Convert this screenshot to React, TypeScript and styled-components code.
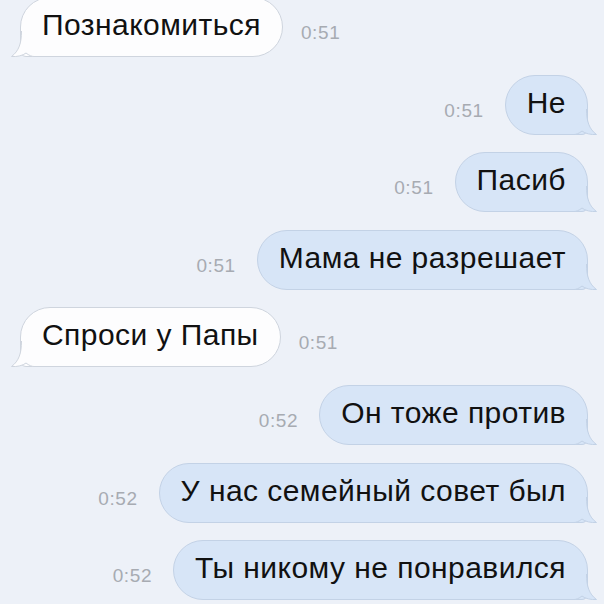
import React from 'react';
import styled, { createGlobalStyle } from 'styled-components';

const GlobalStyle = createGlobalStyle`
  html, body {
    margin: 0;
    padding: 0;
    background: #edf1f8;
  }
  body {
    font-family: "Liberation Sans", Arial, sans-serif;
  }
`;

const Chat = styled.div`
  width: 604px;
  height: 604px;
  overflow: hidden;
  background: #edf1f8;
  box-sizing: border-box;
  padding: 0 16px 0 20px;
`;

const List = styled.div`
  display: flex;
  flex-direction: column;
  gap: 17.6px;
  margin-top: -3px;
`;

const Row = styled.div<{ $out?: boolean }>`
  display: flex;
  align-items: center;
  justify-content: ${(p) => (p.$out ? 'flex-end' : 'flex-start')};
`;

const Bubble = styled.div<{ $out?: boolean }>`
  position: relative;
  box-sizing: border-box;
  height: 60px;
  padding: 9px 21px 13px;
  font-size: 30px;
  line-height: 36px;
  letter-spacing: 0.45px;
  color: #111;
  white-space: nowrap;
  background: ${(p) => (p.$out ? '#d7e5f7' : '#fdfdfe')};
  border: 1px solid ${(p) => (p.$out ? '#c3d2e6' : '#cfd5de')};
  border-radius: ${(p) => (p.$out ? '30px 30px 6px 30px' : '30px 30px 30px 6px')};
`;

const Tail = styled.svg<{ $out?: boolean }>`
  position: absolute;
  bottom: -1px;
  width: 24px;
  height: 26px;
  ${(p) => (p.$out ? 'right: -11px;' : 'left: -11px; transform: scaleX(-1);')}
`;

const Time = styled.span<{ $out?: boolean }>`
  font-size: 19px;
  letter-spacing: 0.6px;
  color: #a7abb2;
  margin-top: 12px;
  ${(p) => (p.$out ? 'margin-right: 21px;' : 'margin-left: 18px;')}
`;

interface Msg {
  text: string;
  time: string;
  out: boolean;
}

const messages: Msg[] = [
  { text: 'Познакомиться', time: '0:51', out: false },
  { text: 'Не', time: '0:51', out: true },
  { text: 'Пасиб', time: '0:51', out: true },
  { text: 'Мама не разрешает', time: '0:51', out: true },
  { text: 'Спроси у Папы', time: '0:51', out: false },
  { text: 'Он тоже против', time: '0:52', out: true },
  { text: 'У нас семейный совет был', time: '0:52', out: true },
  { text: 'Ты никому не понравился', time: '0:52', out: true },
];

const MessageTail: React.FC<{ out: boolean }> = ({ out }) => {
  const fill = out ? '#d7e5f7' : '#fdfdfe';
  const stroke = out ? '#c3d2e6' : '#cfd5de';
  return (
    <Tail $out={out} viewBox="0 0 24 26">
      <path d="M0 0 H12.5 C12.5 12 15 20 22.5 25.5 C17 26 11 24.5 8 22 C5 24.5 2 25.5 0 25.5 Z" fill={fill} />
      <path
        d="M12.5 0 C12.5 12 15 20 22.5 25.5 C17 26 11 24.5 8 22 C5 24.5 2 25.5 0 25.5"
        fill="none"
        stroke={stroke}
        strokeWidth="1"
      />
    </Tail>
  );
};

const App: React.FC = () => {
  return (
    <>
      <GlobalStyle />
      <Chat>
        <List>
          {messages.map((m, i) => (
            <Row key={i} $out={m.out}>
              {m.out && <Time $out>{m.time}</Time>}
              <Bubble $out={m.out}>
                {m.text}
                <MessageTail out={m.out} />
              </Bubble>
              {!m.out && <Time>{m.time}</Time>}
            </Row>
          ))}
        </List>
      </Chat>
    </>
  );
};

export default App;
